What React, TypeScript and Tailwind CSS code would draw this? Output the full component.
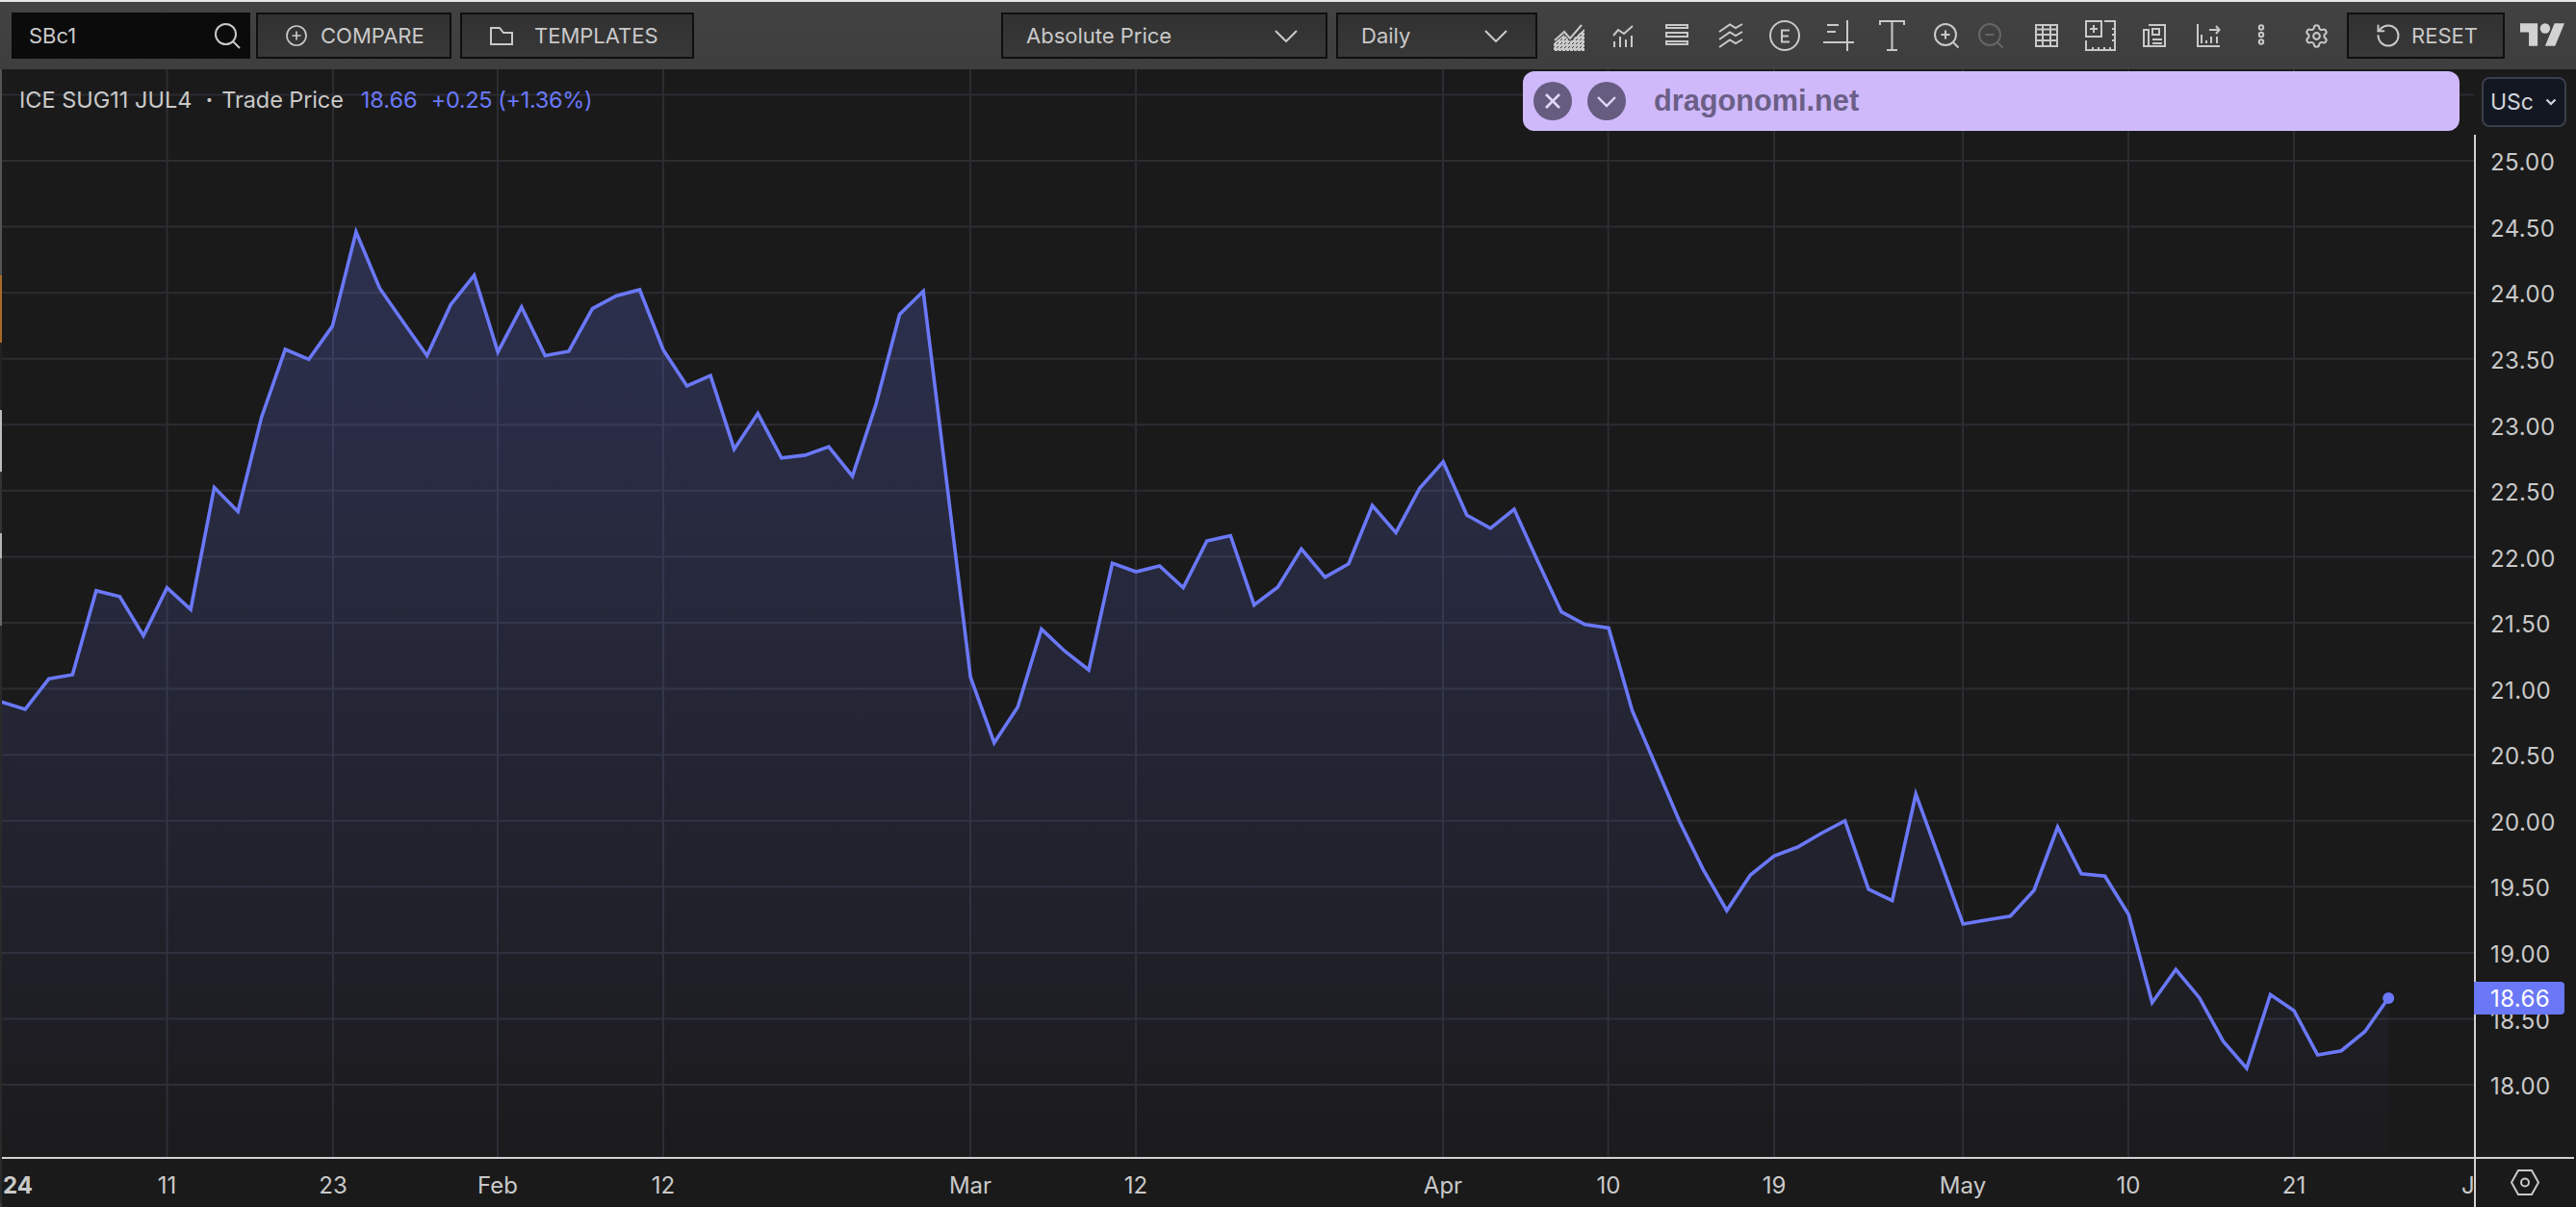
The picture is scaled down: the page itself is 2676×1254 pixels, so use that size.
import React from "react";
import { Settings, RotateCcw } from "lucide-react";

const Y = [729.3,736.9,705.2,701,613.7,619.8,660.4,610.6,633.2,506.5,531.4,433.4,363,373.4,338.9,240.9,299.5,334.7,369.5,316.7,286.1,365.7,319,369.5,364.9,320.6,307.5,301,363.4,400.9,390.2,466.7,429.6,475.9,472.9,464.1,494.7,420,326.7,302.5,502.1,703.6,771.7,734.5,653.6,676.7,696,585.1,594,587.9,610.6,562,556.5,628.5,609.9,570.3,599.6,585.8,525.2,553.4,507.3,479.7,535.2,548.9,529,583,635.7,648.8,652.4,738.3,795.7,853.3,903.3,946,909,889.3,880,865.7,852.7,924,935.7,825,892.3,960,955.7,951.7,925,859.3,907.7,910.3,950,1041.7,1007.3,1036.7,1081.7,1110,1033.3,1050,1096,1091.7,1071.7,1036.7];
const X = (i: number) => 1.65 + i * 24.55;
const linePts = Y.map((y, i) => `${X(i).toFixed(1)},${y}`).join(" ");
const areaPts = `${linePts} ${X(101).toFixed(1)},1202 ${X(0).toFixed(1)},1202`;
const vGrid = [173.5, 346, 517, 689, 1008, 1180, 1499, 1670.6, 1843, 2039, 2211, 2383];
const hGrid = Array.from({ length: 16 }, (_, i) => 98.4 + i * 68.575);
const prices = ["25.00","24.50","24.00","23.50","23.00","22.50","22.00","21.50","21.00","20.50","20.00","19.50","19.00","18.50","18.00"];
const ticks: [string, number][] = [["11",173.5],["23",346],["Feb",517],["12",689],["Mar",1008],["12",1180],["Apr",1499],["10",1671],["19",1843],["May",2039],["10",2211],["21",2383]];

function Icon({ children }: { children: React.ReactNode }) {
  return (
    <svg width="32" height="32" viewBox="0 0 32 32" fill="none" stroke="#c9c9c9" strokeWidth="2" className="shrink-0">
      {children}
    </svg>
  );
}

function Chevron() {
  return (
    <svg width="24" height="13" viewBox="0 0 24 13" fill="none" stroke="#c9c9c9" strokeWidth="2">
      <path d="M1 1L12 12L23 1" />
    </svg>
  );
}

function Btn({ className, children }: { className: string; children: React.ReactNode }) {
  return (
    <div className={`h-[48px] shrink-0 flex items-center border-2 border-[#0f0f0f] bg-gradient-to-b from-[#313131] to-[#383838] text-[#c9c9c9] ${className}`}>
      {children}
    </div>
  );
}

export default function App() {
  return (
    <div className="relative w-[2676px] h-[1254px] flex flex-col overflow-hidden bg-[#1a1a1a] font-[Inter,sans-serif]">
      <div className="h-[2px] bg-[#e6e6e6]" />
      <div className="h-[70px] flex items-center pl-[12px] bg-gradient-to-b from-[#424242] to-[#3e3e3e] text-[22px]">
        <div className="w-[248px] h-[48px] shrink-0 flex items-center justify-between pl-[18px] pr-[10px] bg-[#0b0b0b] text-[#c9c9c9]">
          <span>SBc1</span>
          <svg width="28" height="28" viewBox="0 0 28 28" fill="none" stroke="#c9c9c9" strokeWidth="2">
            <circle cx="12.5" cy="12.5" r="10.5" />
            <path d="M20 20L27 27" />
          </svg>
        </div>
        <Btn className="ml-[6px] w-[203px] pl-[29px] gap-[14px]">
          <svg width="22" height="22" viewBox="0 0 22 22" fill="none" stroke="#c9c9c9" strokeWidth="1.7">
            <circle cx="11" cy="11" r="10" />
            <path d="M11 6.5V15.5M6.5 11H15.5" />
          </svg>
          <span>COMPARE</span>
        </Btn>
        <Btn className="ml-[9px] w-[243px] pl-[29px] gap-[22px]">
          <svg width="24" height="19" viewBox="0 0 24 19" fill="none" stroke="#c9c9c9" strokeWidth="2">
            <path d="M1 1H10L14 6H23V18H1Z" />
          </svg>
          <span>TEMPLATES</span>
        </Btn>
        <Btn className="ml-[319px] w-[339px] pl-[24px] pr-[29px] justify-between">
          <span>Absolute Price</span>
          <Chevron />
        </Btn>
        <Btn className="ml-[9px] w-[209px] pl-[24px] pr-[29px] justify-between">
          <span>Daily</span>
          <Chevron />
        </Btn>
        <div className="ml-[17px] flex items-center gap-[24px]">
          <Icon>
            <defs>
              <pattern id="dither" width="4" height="4" patternUnits="userSpaceOnUse">
                <rect width="2" height="2" fill="#c9c9c9" />
                <rect x="2" y="2" width="2" height="2" fill="#c9c9c9" />
              </pattern>
            </defs>
            <path d="M0 24L11 15L17 22L32 9V32H0Z" fill="url(#dither)" stroke="none" />
            <path d="M1 21L11 12L17 19L29 5" />
          </Icon>
          <Icon>
            <path d="M6 16L11 10L17 14L26 6" />
            <path d="M7 22V28M13 17V28M19 20V28M25 16V28" />
          </Icon>
          <Icon>
            <rect x="5" y="5" width="22" height="3" />
            <rect x="5" y="13" width="22" height="4" />
            <rect x="5" y="22" width="22" height="3" />
          </Icon>
          <Icon>
            <path d="M4 12L15 4.5L21 8L28 4" />
            <path d="M4 20L15 12.5L21 16L28 12" />
            <path d="M4 28L15 20.5L21 24L28 20" />
          </Icon>
          <Icon>
            <circle cx="16" cy="16" r="15" />
            <path d="M21 10.5H13V22.5H21M13 16.5H20" />
          </Icon>
          <Icon>
            <path d="M25 0V32M0 23H32M4 5H16M4 12H13" />
          </Icon>
          <Icon>
            <path d="M3 5V1H28V5M15.5 1V31M10 31H21" />
          </Icon>
          <Icon>
            <circle cx="15" cy="15" r="11" />
            <path d="M22.5 22.5L28.5 28.5M15 10.5V19.5M10.5 15H19.5" />
          </Icon>
          <div className="-ml-[10px]">
            <svg width="32" height="32" viewBox="0 0 32 32" fill="none" stroke="#666666" strokeWidth="2">
              <circle cx="15" cy="15" r="11" />
              <path d="M22.5 22.5L28.5 28.5M10.5 15H19.5" />
            </svg>
          </div>
          <div className="ml-[2px]">
            <Icon>
              <rect x="5" y="5" width="22" height="22" />
              <path d="M5 9.5H27M5 15H27M5 21H27M12 5V27M20 5V27" />
            </Icon>
          </div>
          <Icon>
            <rect x="1" y="1" width="16" height="16" />
            <path d="M9 5V13M5 9H13M20 1H31V31H1V21M28 9H31M28 15H31M28 21H31M8 28V31M14 28V31M20 28V31M26 28V31" />
          </Icon>
          <Icon>
            <path d="M10 5H27V27H5V10H10V27" />
            <rect x="14" y="9" width="7" height="6" />
            <path d="M14 20H24M14 24H24" />
          </Icon>
          <Icon>
            <path d="M5 4V27H28M9 15V24M14 21V24M19 17V24M25 17V24M17 10H27M24 6L27.5 10L24 14" />
          </Icon>
          <Icon>
            <circle cx="15" cy="7.5" r="2.2" />
            <circle cx="15" cy="15" r="2.2" />
            <circle cx="15" cy="22.5" r="2.2" />
          </Icon>
          <div className="w-[32px] h-[32px] flex items-center justify-center">
            <Settings size={27} strokeWidth={1.8} color="#c9c9c9" />
          </div>
        </div>
        <Btn className="ml-[16px] w-[164px] pl-[27px] gap-[10px]">
          <RotateCcw size={28} strokeWidth={1.7} color="#c9c9c9" />
          <span>RESET</span>
        </Btn>
        <svg width="46" height="24" viewBox="0 4 35.5 18" fill="#d2d2d2" className="ml-[16px] mb-[2px] shrink-0">
          <path d="M14 22H7V11H0V4h14v18zM28 22h-8l7.5-18h8L28 22z" />
          <circle cx="20" cy="8" r="4" />
        </svg>
      </div>

      <div className="flex-1 flex min-h-0">
        <div className="w-[2px] flex flex-col bg-[#3a3a3a]">
          <div className="h-[214px] bg-[#555555]" />
          <div className="h-[70px] bg-[#a86a28]" />
          <div className="h-[70px] bg-[#222222]" />
          <div className="h-[64px] bg-[#bdbdbd]" />
          <div className="h-[64px] bg-[#333333]" />
          <div className="h-[26px] bg-[#b5b5b5]" />
          <div className="h-[70px] bg-[#6a6a6a]" />
          <div className="h-[600px] bg-[#2a2a2a]" />
        </div>

        <div className="w-[2568px] flex flex-col">
          <div className="relative h-[1130px]">
            <svg width="2568" height="1130" viewBox="2 72 2568 1130" className="block">
              <defs>
                <linearGradient id="area" gradientUnits="userSpaceOnUse" x1="0" y1="240" x2="0" y2="1202">
                  <stop offset="0" stopColor="#6a78f8" stopOpacity="0.24" />
                  <stop offset="1" stopColor="#6a78f8" stopOpacity="0.012" />
                </linearGradient>
              </defs>
              {vGrid.map((x) => (
                <line key={x} x1={x} x2={x} y1="72" y2="1202" stroke="#2c2c32" strokeWidth="2" />
              ))}
              {hGrid.map((y) => (
                <line key={y} x1="2" x2="2570" y1={y} y2={y} stroke="#2c2c32" strokeWidth="2" />
              ))}
              <polygon points={areaPts} fill="url(#area)" />
              <polyline points={linePts} fill="none" stroke="#6a78f8" strokeWidth="3.6" strokeLinejoin="miter" />
              <circle cx={X(101)} cy="1037" r="6" fill="#6a78f8" />
            </svg>
            <div className="absolute left-[18px] top-[18px] flex items-center h-[28px] text-[23.5px] whitespace-nowrap">
              <span className="text-[#c9c9c9]">ICE SUG11 JUL4</span>
              <span className="ml-[14px] text-[#c9c9c9] font-bold">·</span>
              <span className="ml-[9px] text-[#c9c9c9] tracking-[-0.1px]">Trade Price</span>
              <span className="ml-[18px] text-[#6a78f8]">18.66</span>
              <span className="ml-[14px] text-[#6a78f8] tracking-[-0.35px]">+0.25 (+1.36%)</span>
            </div>
          </div>
          <div className="relative flex-1 border-t-2 border-[#d2d2d2] text-[24px] text-[#c9c9c9]">
            <span className="absolute left-[1px] top-[11px] leading-[34px] font-bold">24</span>
            {ticks.map(([t, x]) => (
              <span key={`${t}${x}`} className="absolute top-[11px] leading-[34px] -translate-x-1/2" style={{ left: x - 2 }}>
                {t}
              </span>
            ))}
            <span className="absolute left-[2555px] top-[11px] leading-[34px]">J</span>
          </div>
        </div>

        <div className="relative w-[106px] flex flex-col text-[24px] text-[#c9c9c9]">
          <div className="h-[68px] pt-[8px] pl-[8px]">
            <div className="w-[88px] h-[52px] flex items-center justify-between pl-[7px] pr-[8px] rounded-[8px] border-2 border-[#3a3e4a] bg-[#131722] text-[#d1d4dc] text-[23px]">
              <span>USc</span>
              <svg width="12" height="8" viewBox="0 0 12 8" fill="none" stroke="#d1d4dc" strokeWidth="2.2">
                <path d="M1.5 1.5L6 6L10.5 1.5" />
              </svg>
            </div>
          </div>
          <div className="h-[1062px] border-l-2 border-[#d2d2d2] flex flex-col pl-[15px] tracking-[0.4px]">
            {prices.map((p) => (
              <div key={p} className="h-[68.575px] shrink-0 flex items-center first:-mt-[5px]">
                {p}
              </div>
            ))}
          </div>
          <div className="flex-1 mr-[2px] border-l-2 border-t-2 border-[#d2d2d2] flex items-center pl-[36px] pb-[1px]">
            <svg width="30" height="27" viewBox="0 0 30 27" fill="none" stroke="#c9c9c9" strokeWidth="2">
              <path d="M1 13.5L8 1H22L29 13.5L22 26H8Z" />
              <circle cx="15" cy="13.5" r="4" />
            </svg>
          </div>
          <div className="absolute left-0 top-[948px] w-[94px] h-[34px] pl-[17px] pt-[1px] flex items-center rounded-r-[4px] bg-[#6a78f8] text-white tracking-[0.4px]">
            18.66
          </div>
        </div>
      </div>

      <div className="absolute left-[1582px] top-[74px] w-[973px] h-[62px] pl-[11px] flex items-center rounded-[12px] bg-[#cfb9fb]">
        <div className="w-[40px] h-[40px] rounded-full bg-[#665c80] flex items-center justify-center">
          <svg width="20" height="20" viewBox="0 0 20 20" fill="none" stroke="#e2d8f8" strokeWidth="2.6">
            <path d="M3 3L17 17M17 3L3 17" />
          </svg>
        </div>
        <div className="ml-[16px] w-[40px] h-[40px] rounded-full bg-[#665c80] flex items-center justify-center">
          <svg width="22" height="13" viewBox="0 0 22 13" fill="none" stroke="#e2d8f8" strokeWidth="2.4">
            <path d="M2 2L11 11L20 2" />
          </svg>
        </div>
        <span className="ml-[29px] font-['Liberation_Sans',sans-serif] font-bold text-[30.7px] text-[#6b5f87]">dragonomi.net</span>
      </div>
    </div>
  );
}
